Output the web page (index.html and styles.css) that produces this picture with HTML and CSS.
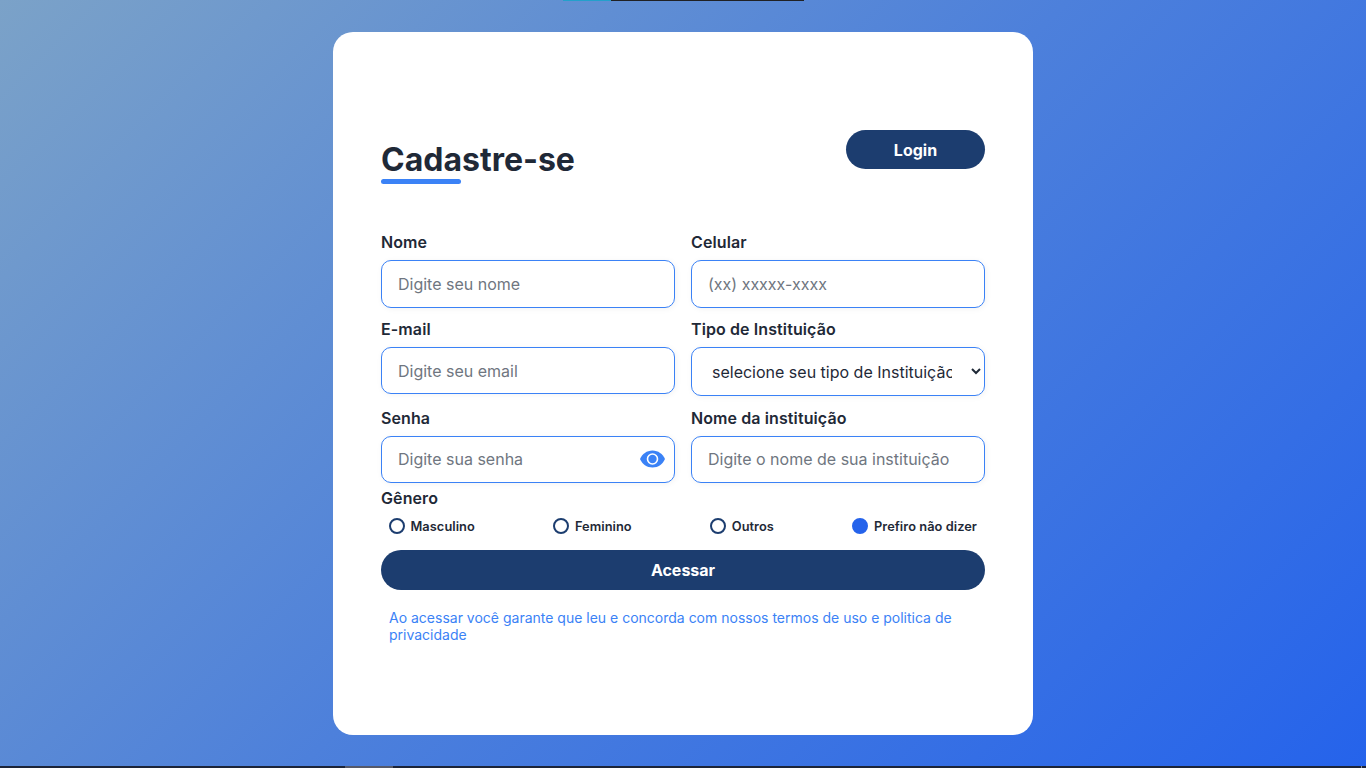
FILE: index.html
```html
<!DOCTYPE html>
<html lang="pt-BR">
<head>
<meta charset="UTF-8">
<title>Cadastre-se</title>
<link rel="stylesheet" href="styles.css">
</head>
<body>
<div class="top-strip"><span></span></div>
<main class="card">
  <header class="card-header">
    <h1 class="title">Cadastre-se</h1>
    <button class="btn btn-login" type="button">Login</button>
  </header>
  <form class="form">
    <div class="fields">
      <div class="field"><label for="nome">Nome</label><input class="tall" id="nome" type="text" placeholder="Digite seu nome"></div>
      <div class="field"><label for="celular">Celular</label><input class="tall" id="celular" type="text" placeholder="(xx) xxxxx-xxxx"></div>
      <div class="field"><label for="email">E-mail</label><input id="email" type="email" placeholder="Digite seu email"></div>
      <div class="field"><label for="tipo">Tipo de Instituição</label><select id="tipo"><option>selecione seu tipo de Instituição</option></select></div>
      <div class="field"><label for="senha">Senha</label>
        <div class="password"><input class="raised" id="senha" type="password" placeholder="Digite sua senha">
          <svg class="eye" viewBox="0 0 25 18"><path fill="#3b82f6" d="M12.500 .5C6.800 .5 2.200 4 0 9c2.200 5 6.800 8.500 12.500 8.500S22.800 14 25 9C22.800 4 18.200 .5 12.500 .5Z"/><circle cx="12.500" cy="9" r="5" fill="#3b82f6" stroke="#fff" stroke-width="1.600"/></svg>
        </div>
      </div>
      <div class="field"><label for="inst">Nome da instituição</label><input class="raised" id="inst" type="text" placeholder="Digite o nome de sua instituição"></div>
    </div>
    <div class="gender-title">Gênero</div>
    <div class="genders">
      <label><input type="radio" name="genero">Masculino</label>
      <label><input type="radio" name="genero">Feminino</label>
      <label><input type="radio" name="genero">Outros</label>
      <label><input type="radio" name="genero" checked>Prefiro não dizer</label>
    </div>
    <button class="btn btn-submit" type="button">Acessar</button>
    <p class="terms">Ao acessar você garante que leu e concorda com nossos termos de uso e politica de privacidade</p>
  </form>
</main>
<div class="bottom-strip"><span class="active"></span><span class="edge"></span></div>
</body>
</html>
```
FILE: styles.css
```css
* { box-sizing: border-box; margin: 0; padding: 0; }
body {
  height: 768px;
  overflow: hidden;
  display: flex;
  justify-content: center;
  align-items: flex-start;
  padding-top: 32px;
  font-family: Inter, sans-serif;
  color: #1f2937;
  background: linear-gradient(135deg, #7ba2c8 0%, #4d80db 50%, #2563eb 100%);
}
.top-strip { position: absolute; top: 0; left: 563px; width: 241px; height: 1px; background: #202124; }
.top-strip span { display: block; width: 48px; height: 1px; background: #23a0cb; }
.bottom-strip { position: absolute; left: 0; bottom: 0; width: 100%; height: 2px; background: #1c2438; display: flex; justify-content: space-between; padding: 0 4px 0 345px; }
.bottom-strip .active { width: 48px; background: #55596a; }
.bottom-strip .edge { width: 1px; background: #8a8f9c; }
.card { width: 700px; height: 703px; padding: 98px 48px 0; background: #fff; border-radius: 20px; }
.card-header { display: flex; justify-content: space-between; height: 102px; }
.title { align-self: flex-start; margin-top: 10px; font-size: 32px; line-height: 39px; font-weight: 700; }
.title::after { content: ""; display: block; width: 80px; height: 5px; border-radius: 3px; background: #3b82f6; }
.btn { border: 0; border-radius: 20px; background: #1c3d6f; color: #fff; font: 700 16px/20px Inter, sans-serif; }
.btn-login { width: 139px; height: 39px; }
.fields { display: grid; grid-template-columns: 294px 294px; column-gap: 16px; grid-template-rows: 87px 89px 87px; }
.field label { display: block; height: 28px; font-size: 16px; line-height: 20px; font-weight: 600; letter-spacing: .1px; }
.field input, .field select {
  display: block;
  width: 100%;
  height: 47px;
  padding: 0 16px;
  border: 1px solid #3b82f6;
  border-radius: 10px;
  background: #fff;
  color: #1f2937;
  font: 400 16px Inter, sans-serif;
  box-shadow: 1px 1px 6px #0000000d;
  outline: none;
}
.field input.tall { height: 48px; }
.field input.raised { padding-bottom: 2px; }
.field input::placeholder { color: #6f7680; }
.field select { height: 49px; padding: 1px 16px 0 16px; }
.password { position: relative; }
.eye { position: absolute; right: 10px; top: 13.5px; width: 25px; height: 18px; }
.gender-title { margin-top: -7px; height: 30px; line-height: 20px; font-size: 16px; font-weight: 600; letter-spacing: .1px; }
.genders { display: flex; justify-content: space-between; padding: 0 8px; height: 32px; }
.genders label { display: flex; align-items: center; gap: 5.5px; height: 16px; font-size: 12.8px; font-weight: 600; letter-spacing: .06px; }
.genders input { appearance: none; width: 16px; height: 16px; border: 2px solid #1c3d6f; border-radius: 50%; }
.genders input:checked { border-color: #2563eb; background: #2563eb; }
.btn-submit { display: block; width: 100%; height: 40px; }
.terms { padding: 19px 8px 0; font-size: 14px; line-height: 17px; color: #3b82f6; }
```
